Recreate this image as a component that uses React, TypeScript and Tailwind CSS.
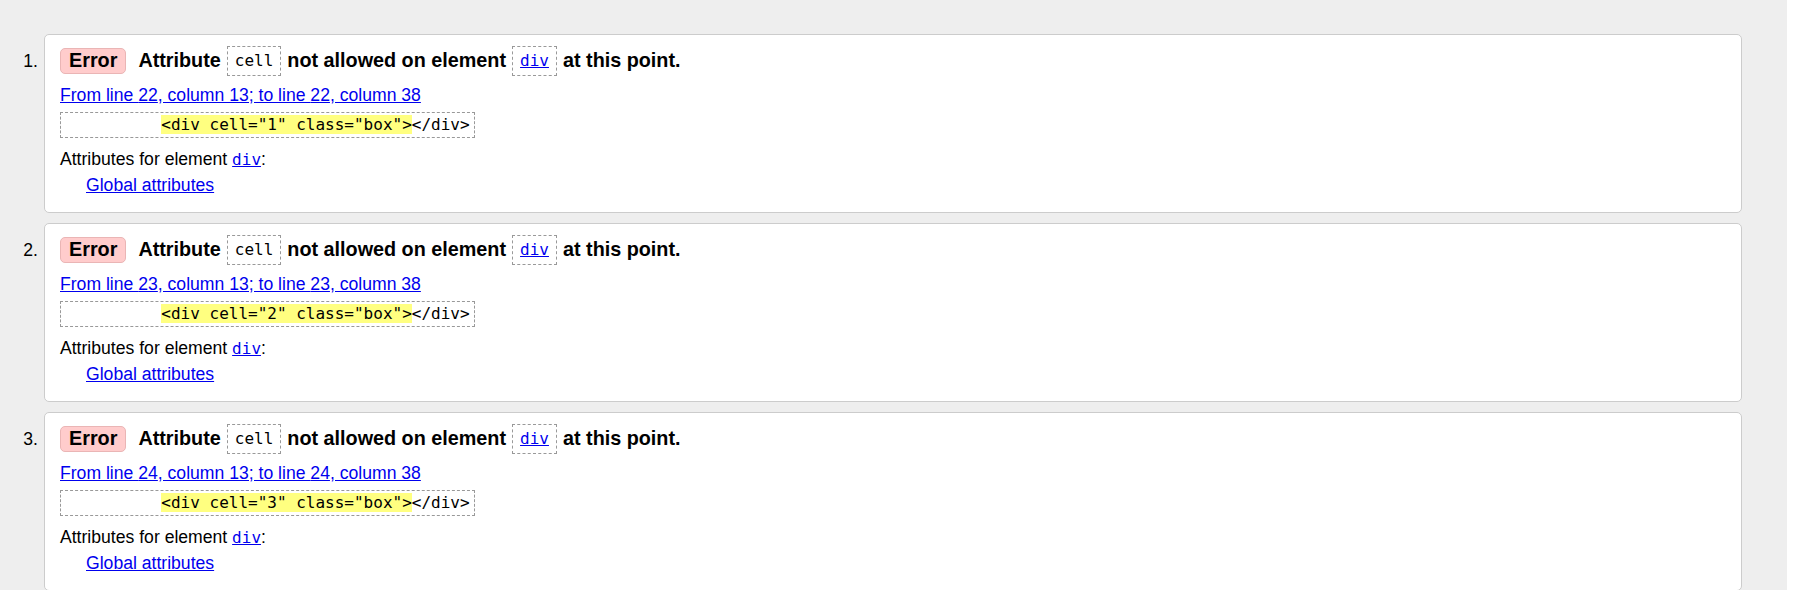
import React from 'react';

type Issue = {
  line: number;
  cell: string;
};

const issues: Issue[] = [
  { line: 22, cell: '1' },
  { line: 23, cell: '2' },
  { line: 24, cell: '3' },
];

const sans = "font-['Liberation_Sans',Arial,sans-serif]";
const mono = "font-['DejaVu_Sans_Mono','Liberation_Mono',monospace]";

const CodeChip: React.FC<{ children: React.ReactNode; link?: boolean }> = ({ children, link }) => (
  <span className={`${mono} inline-flex items-center h-[30px] px-[7px] border border-dashed border-[#999] text-[16px] font-normal`}>
    {link ? <a href="#" className="text-[#0000ee] underline">{children}</a> : children}
  </span>
);

const IssueCard: React.FC<{ issue: Issue; index: number }> = ({ issue, index }) => {
  const snippet = `<div cell="${issue.cell}" class="box">`;

  return (
    <li className="flex items-start">
      <div className={`${sans} w-[44px] shrink-0 pt-[12px] pr-[6px] text-right text-[17.6px] leading-[30px] text-black`}>
        {index + 1}.
      </div>
      <div className="flex-1 bg-white border border-[#cccccc] rounded-[5px] pt-[11px] pb-[14px] px-[15px]">
        {/* heading row */}
        <div className={`${sans} flex items-center h-[30px] gap-[6px] text-[19.8px] font-bold text-black`}>
          <span className="flex items-center h-[26px] px-[8px] mr-[6px] bg-[#ffcccc] border border-[#eab5b5] rounded-[5px]">
            Error
          </span>
          <span>Attribute</span>
          <CodeChip>cell</CodeChip>
          <span>not allowed on element</span>
          <CodeChip link>div</CodeChip>
          <span>at this point.</span>
        </div>

        <div className={`${sans} mt-[7px] text-[17.6px] leading-[24px]`}>
          <a href="#" className="text-[#0000ee] underline">
            From line {issue.line}, column 13; to line {issue.line}, column 38
          </a>
        </div>

        <div className="mt-[5px] flex">
          <code className={`${mono} block border border-dashed border-[#999] px-[4px] text-[16px] leading-[24px] text-black whitespace-pre`}>
            {'          '}
            <mark className="bg-[#ffff80] text-black">{snippet}</mark>
            {'</div>'}
          </code>
        </div>

        <div className={`${sans} mt-[8px] h-[26px] text-[17.6px] leading-[26px] text-black`}>
          Attributes for element{' '}
          <a href="#" className={`${mono} text-[16px] leading-none text-[#0000ee] underline`}>div</a>:
        </div>
        <div className={`${sans} pl-[26px] text-[17.6px] leading-[26px]`}>
          <a href="#" className="text-[#0000ee] underline">Global attributes</a>
        </div>
      </div>
    </li>
  );
};

export default function App() {
  return (
    <div className="min-h-screen bg-white">
      <div className="mr-[10px] min-h-screen bg-[#eeeeee] pt-[34px] pr-[45px]">
        <ol className="flex flex-col gap-[10px]">
          {issues.map((issue, i) => (
            <IssueCard key={issue.line} issue={issue} index={i} />
          ))}
        </ol>
      </div>
    </div>
  );
}
